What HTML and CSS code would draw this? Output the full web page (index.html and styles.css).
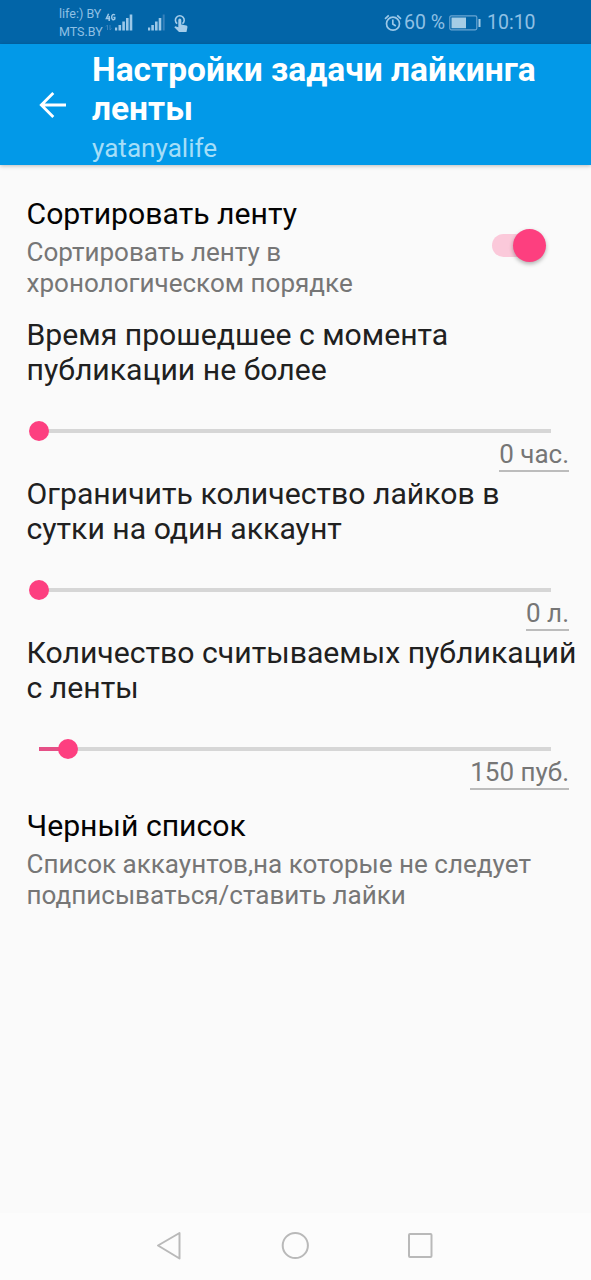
FILE: index.html
```html
<!DOCTYPE html>
<html lang="ru">
<head>
<meta charset="utf-8">
<title>Настройки задачи лайкинга ленты</title>
<link rel="stylesheet" href="styles.css">
</head>
<body>
<div class="status">
  <div class="carriers"><span>life:) BY</span><span>MTS.BY</span></div>
  <svg class="signals" width="84" height="44" viewBox="0 0 84 44">
    <g fill="none" stroke="#9cc8e8" stroke-width="1.5"><path d="M3.6 13.8L1.4 18.4H5.2M4.2 16V21M10 15C8 13.6 6.7 15 6.7 17.2S8.2 20.6 9.8 19V17.4H8.4"/></g>
    <path d="M2.5 25v5M1 26.5L2.5 25M5 25v5M6.5 28.5L5 30" stroke="#3f85bd" fill="none"/>
    <g fill="#9cc8e8"><path d="M10 27.5h2.2V30.5h-2.2zM13.5 25h2.6v5.5h-2.6zM17.3 21.5h2.6V30.5h-2.6zM21 18h2.6v12.5h-2.6zM24.7 14.5h2.6V30.5h-2.6zM43 27.5h2.2V30.5h-2.2zM46.3 25h2.6v5.5h-2.6zM50 21.5h2.6V30.5H50zM53.7 18h2.6v12.5h-2.6z"/><path d="M57.7 14.5h2V30.5h-2z" fill="#3781ba"/></g>
    <g transform="translate(-1 0)"><path d="M73.2 23.7a4.4 4.4 0 1 1 5.2 0" fill="none" stroke="#a5cdea" stroke-width="1.6"/>
    <path d="M74.3 20a1.5 1.5 0 0 1 3 0v4.5l5 1c1 .3 1.3 1 1.1 2L82.5 32H75l-4.7-4.7 1-1 3 1z" fill="#a5cdea"/></g>
  </svg>
  <div class="right">
    <svg width="18" height="18" viewBox="0 0 18 18" fill="none" stroke="#9cc8e8" stroke-width="1.7"><circle cx="9" cy="9.7" r="6.5"/><path d="M1 4.8L4.8 1.4M13.2 1.4L17 4.8M8.8 5.5V10l3 2"/></svg>
    <span class="percent">60 %</span>
    <svg class="battery" width="33" height="16" viewBox="0 0 33 16"><rect x=".8" y=".8" width="27" height="14" rx="1.5" fill="none" stroke="#69a5d2" stroke-width="1.2"/><path d="M2.5 2.5h14.5v10.7H2.5zM29.5 4h2v8h-2z" fill="#a5cde6"/></svg>
    <span class="clock">10:10</span>
  </div>
</div>
<header class="appbar">
  <svg class="back" width="28" height="28" viewBox="0 0 28 28" fill="none" stroke="#fff" stroke-width="2.8"><path d="M27 14H3M14.3 2L2.3 14l12 12"/></svg>
  <div class="heading"><h1>Настройки задачи лайкинга<br>ленты</h1><p>yatanyalife</p></div>
</header>
<main>
  <section class="switch-row">
    <div><h2 class="strong">Сортировать ленту</h2><p class="summary">Сортировать ленту в<br>хронологическом порядке</p></div>
    <div class="switch"><i class="knob"></i></div>
  </section>
  <section class="slider-row">
    <h2>Время прошедшее с момента<br>публикации не более</h2>
    <div class="slider"><i class="thumb"></i></div>
    <div class="value"><span>0 час.</span></div>
  </section>
  <section class="slider-row">
    <h2>Ограничить количество лайков в<br>сутки на один аккаунт</h2>
    <div class="slider"><i class="thumb"></i></div>
    <div class="value"><span>0 л.</span></div>
  </section>
  <section class="slider-row">
    <h2>Количество считываемых публикаций<br>с ленты</h2>
    <div class="slider"><i class="fill"></i><i class="thumb"></i></div>
    <div class="value"><span>150 пуб.</span></div>
  </section>
  <section class="list-row"><h2 class="strong">Черный список</h2><p class="summary">Список аккаунтов,на которые не следует<br>подписываться/ставить лайки</p></section>
</main>
<nav class="navbar">
  <svg width="330" height="67" viewBox="0 0 330 67" fill="none" stroke="#b9b9b9" stroke-width="2" stroke-linejoin="round"><path d="M28 32.5L49.5 20v25.5z"/><circle cx="165.3" cy="32.5" r="12.6"/><rect x="279" y="21" width="22.5" height="23" rx="1"/></svg>
</nav>
</body>
</html>
```
FILE: styles.css
```css
* { box-sizing: border-box; margin: 0; padding: 0; }
body { width: 591px; height: 1280px; display: flex; flex-direction: column; overflow: hidden; background: #fafafa; font-family: Roboto, sans-serif; white-space: nowrap; }
svg { display: block; flex: none; }
.status { height: 44px; flex: none; display: flex; background: #0265a8; color: #8fc0e4; padding-left: 59px; }
.carriers { width: 46px; padding-top: 5px; font-size: 12.5px; line-height: 18px; display: flex; flex-direction: column; }
.right { display: flex; align-items: center; height: 45px; margin-left: 195px; font-size: 19.5px; }
.percent { width: 45px; margin-left: 2px; }
.battery { margin-right: 5px; }
.appbar { height: 121px; flex: none; display: flex; background: #0299e8; color: #fff; box-shadow: 0 1px 4px rgba(0,0,0,.25); }
.back { margin: 47px 25px 0 39px; }
h1 { padding-top: 6px; font-size: 33.5px; line-height: 39px; font-weight: 700; }
.heading p { font-size: 26.1px; line-height: 31px; margin-top: 5px; color: #a5def8; }
main { flex: 1; padding: 31px 22px 0 26.5px; }
h2 { font-size: 30.2px; line-height: 35.3px; font-weight: 400; color: #202020; }
h2.strong { color: #030303; }
.summary { font-size: 26.05px; line-height: 31px; color: #767676; margin-top: 6px; }
.switch-row { display: flex; justify-content: space-between; height: 121px; }
.switch { width: 50px; height: 23px; border-radius: 12px; background: #fbc9da; margin: 38px 27px 0 0; display: flex; align-items: center; justify-content: flex-end; }
.knob { width: 33px; height: 33px; flex: none; margin-right: -4px; border-radius: 50%; background: #fd3f7f; box-shadow: 0 2px 4px rgba(0,0,0,.3); }
.slider-row { height: 159px; }
.slider { width: 512px; height: 20px; margin: 33px 0 0 12.5px; display: flex; align-items: center; background: linear-gradient(#d6d6d6, #d6d6d6) 0 center / 100% 4px no-repeat; }
.thumb { width: 20px; height: 20px; margin-left: -10px; border-radius: 50%; background: #fd3f80; }
.fill { width: 29px; height: 4px; background: #e54f86; }
.value { display: flex; justify-content: flex-end; color: #767676; font-size: 26px; line-height: 27px; }
.value span { padding-bottom: 2px; border-bottom: 2px solid #bcbcbc; }
.list-row { padding-top: 14px; }
.navbar { height: 67px; flex: none; background: #fcfcfc; padding-left: 130px; }
```
